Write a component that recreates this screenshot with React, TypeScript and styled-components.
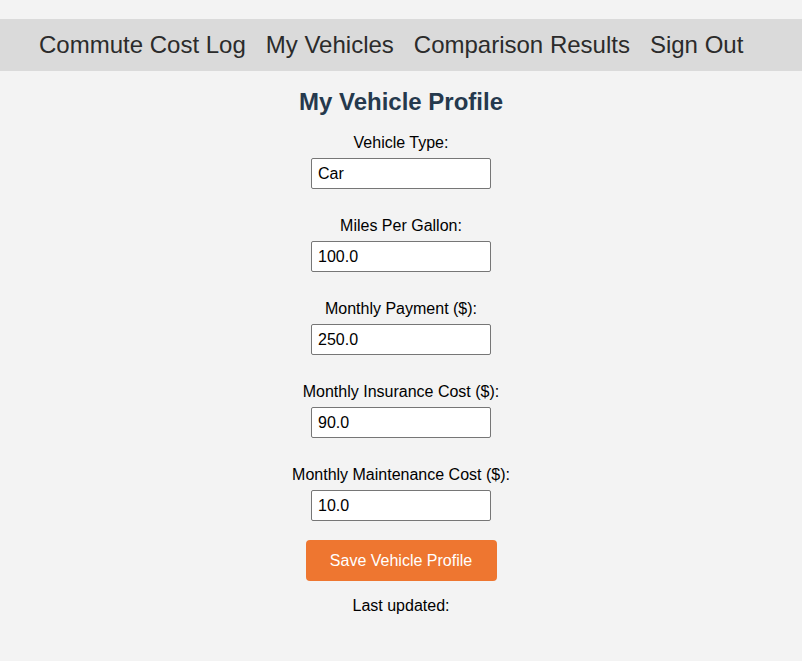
import React, { FC, useState } from 'react';
import styled, { createGlobalStyle } from 'styled-components';

const GlobalStyle = createGlobalStyle`
	body {
		margin: 0;
		background: #f3f3f3;
		font-family: "Liberation Sans", Arial, sans-serif;
		color: #000;
	}
`;

const Page = styled.div`
	padding-top: 19px;
	min-height: 642px;
`;

const NavBar = styled.nav`
	display: flex;
	align-items: center;
	gap: 20px;
	height: 52px;
	padding: 0 39px;
	background: #dadada;
`;

const NavLink = styled.a`
	font-size: 24px;
	color: #2b2b2b;
	text-decoration: none;
	cursor: pointer;
`;

const Title = styled.h2`
	margin: 17px 0 8px;
	text-align: center;
	font-size: 24px;
	font-weight: bold;
	color: #25394d;
`;

const Form = styled.form`
	display: flex;
	flex-direction: column;
	align-items: center;
`;

const Field = styled.div`
	display: flex;
	flex-direction: column;
	align-items: center;
	gap: 6px;
	margin-top: 10px;

	& + & {
		margin-top: 28px;
	}
`;

const Label = styled.label`
	font-size: 16px;
	line-height: 18px;
`;

const Input = styled.input`
	box-sizing: border-box;
	width: 180px;
	height: 31px;
	padding: 0 6px;
	border: 1px solid #767676;
	border-radius: 2px;
	background: #fff;
	font-family: "Liberation Sans", Arial, sans-serif;
	font-size: 16px;
	color: #000;
`;

const SaveButton = styled.button`
	margin-top: 19px;
	width: 191px;
	height: 41px;
	border: none;
	border-radius: 4px;
	background: #ee7630;
	color: #fff;
	font-family: "Liberation Sans", Arial, sans-serif;
	font-size: 16px;
	cursor: pointer;
`;

const LastUpdated = styled.p`
	margin: 16px 0 0;
	text-align: center;
	font-size: 16px;
	line-height: 18px;
`;

const fields = [
	{ key: 'type', label: 'Vehicle Type:', value: 'Car' },
	{ key: 'mpg', label: 'Miles Per Gallon:', value: '100.0' },
	{ key: 'payment', label: 'Monthly Payment ($):', value: '250.0' },
	{ key: 'insurance', label: 'Monthly Insurance Cost ($):', value: '90.0' },
	{ key: 'maintenance', label: 'Monthly Maintenance Cost ($):', value: '10.0' },
];

const App: FC = () => {
	const [values, setValues] = useState<Record<string, string>>(
		Object.fromEntries(fields.map((f) => [f.key, f.value]))
	);

	return (
		<Page>
			<GlobalStyle />
			<NavBar>
				<NavLink>Commute Cost Log</NavLink>
				<NavLink>My Vehicles</NavLink>
				<NavLink>Comparison Results</NavLink>
				<NavLink>Sign Out</NavLink>
			</NavBar>
			<Title>My Vehicle Profile</Title>
			<Form onSubmit={(e) => e.preventDefault()}>
				{fields.map((field) => (
					<Field key={field.key}>
						<Label htmlFor={field.key}>{field.label}</Label>
						<Input
							id={field.key}
							type="text"
							value={values[field.key]}
							onChange={(e) => setValues({ ...values, [field.key]: e.target.value })}
						/>
					</Field>
				))}
				<SaveButton type="submit">Save Vehicle Profile</SaveButton>
			</Form>
			<LastUpdated>Last updated:</LastUpdated>
		</Page>
	);
};

export default App;
